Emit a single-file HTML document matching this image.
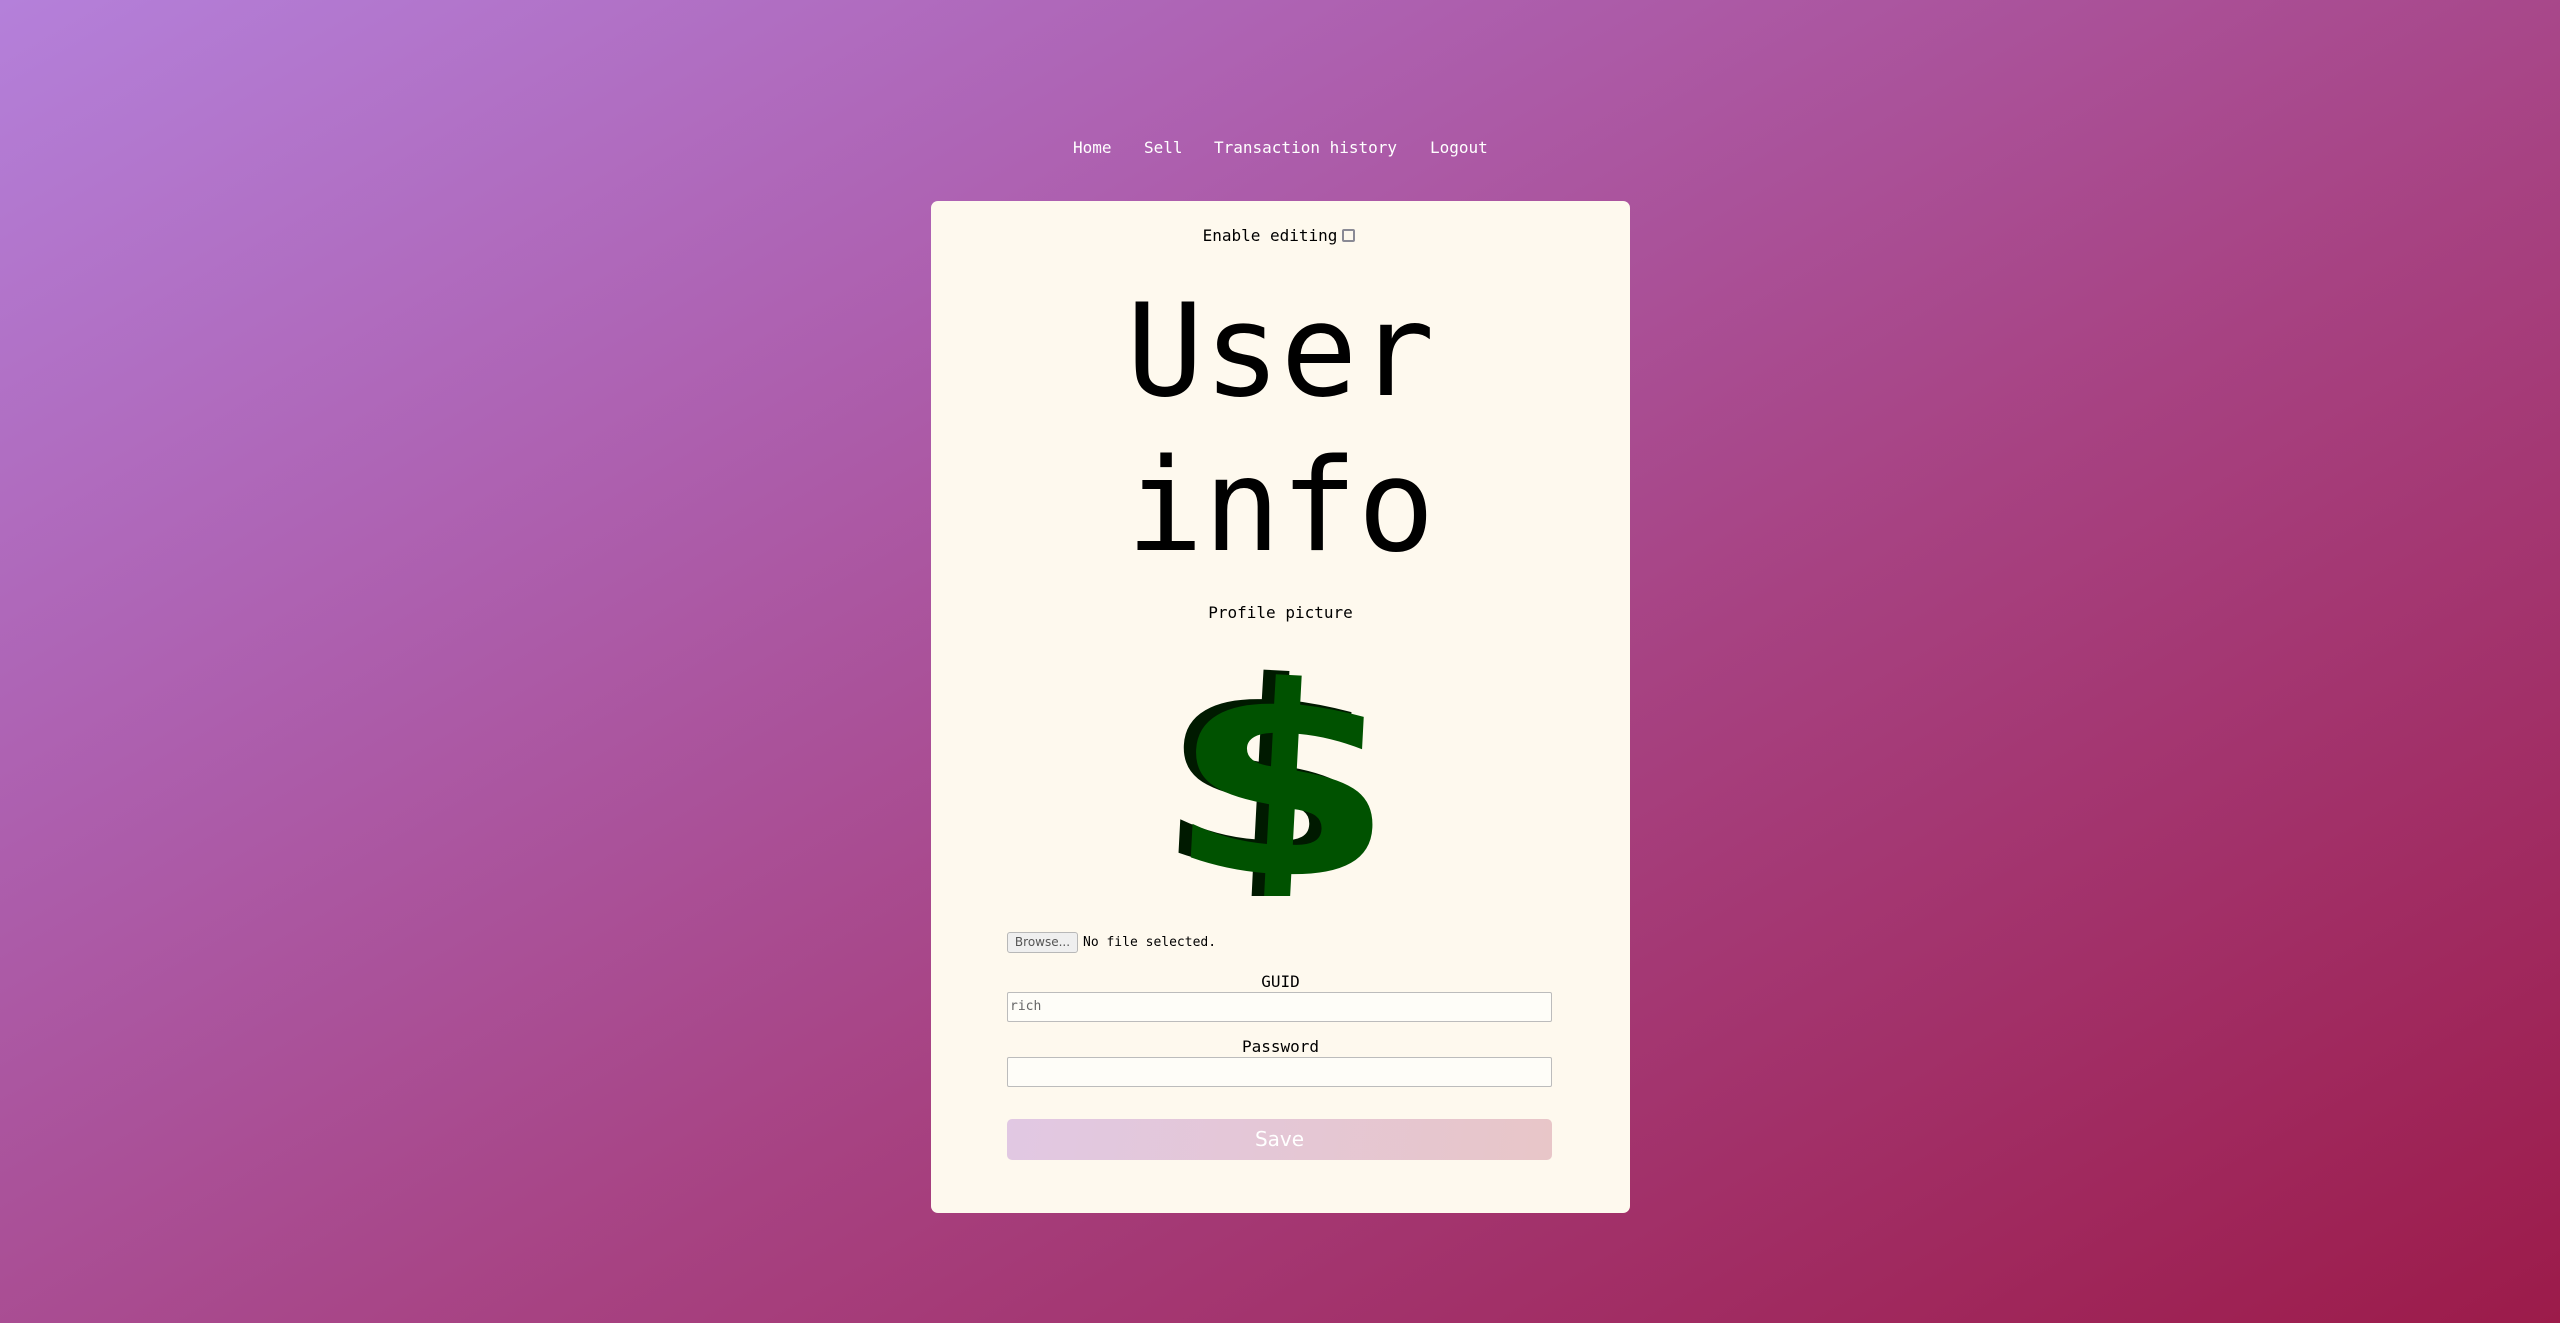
<!DOCTYPE html>
<html><head><meta charset="utf-8"><style>
html,body{margin:0;padding:0}
body{width:2560px;height:1323px;overflow:hidden;position:relative;
background:linear-gradient(150deg,#b480da 0%,#ad5fae 30%,#a74282 58%,#9c1b4a 100%);
font-family:"DejaVu Sans Mono","Liberation Mono",monospace;}
.nav a{position:absolute;top:137px;color:#fff;font-size:16px;text-decoration:none;line-height:22px}
.card{position:absolute;left:931px;top:201px;width:699px;height:1012px;background:#fef9ee;border-radius:7px}
.t{position:absolute;left:0;width:699px;text-align:center;color:#000}
.inp{position:absolute;left:76px;width:545px;height:30px;border:1px solid #bcbcbc;border-radius:2px;background:#fefdf8;box-sizing:border-box}
</style></head><body>
<div class="nav">
<a style="left:1073px">Home</a>
<a style="left:1144px">Sell</a>
<a style="left:1214px">Transaction history</a>
<a style="left:1430px">Logout</a>
</div>
<div class="card">
<div class="t" style="top:24px;font-size:16px;line-height:22px;padding-right:3px;box-sizing:border-box">Enable editing<span style="display:inline-block;width:13px;height:13px;border:2px solid #8a8a95;border-radius:2px;margin-left:5px;vertical-align:-1px;box-sizing:border-box"></span></div>
<div class="t" style="top:73px;font-size:128px;line-height:155px">User<br>info</div>
<div class="t" style="top:401px;font-size:16px;line-height:22px">Profile picture</div>
<svg style="position:absolute;left:245px;top:445px" width="220" height="250" viewBox="0 0 220 250">
<g transform="translate(110,125) rotate(3) scale(1.25,1) translate(-110,-125)">
<text x="98" y="224" font-family="DejaVu Sans" font-weight="bold" font-size="262" fill="#001a00" text-anchor="middle">$</text>
<text x="108" y="228" font-family="DejaVu Sans" font-weight="bold" font-size="262" fill="#005200" text-anchor="middle">$</text>
</g>
</svg>
<div style="position:absolute;left:76px;top:731px;width:71px;height:21px;border:1px solid #b8b8b8;border-radius:3px;background:#efefef;box-sizing:border-box;font-family:'DejaVu Sans',sans-serif;font-size:12px;color:#555;text-align:center;line-height:19px">Browse...</div>
<div style="position:absolute;left:152px;top:732px;font-size:13px;line-height:20px">No file selected.</div>
<div class="t" style="top:771px;font-size:16px;line-height:20px">GUID</div>
<div class="inp" style="top:791px;font-size:13px;color:#666;line-height:28px;padding-left:2px">rich</div>
<div class="t" style="top:836px;font-size:16px;line-height:20px">Password</div>
<div class="inp" style="top:856px"></div>
<div style="position:absolute;left:76px;top:918px;width:545px;height:41px;border-radius:5px;background:linear-gradient(100deg,#e1c8e3,#e8c6c8);color:#fff;text-align:center;line-height:41px;font-family:'DejaVu Sans',sans-serif;font-size:20px">Save</div>
</div>
</body></html>
